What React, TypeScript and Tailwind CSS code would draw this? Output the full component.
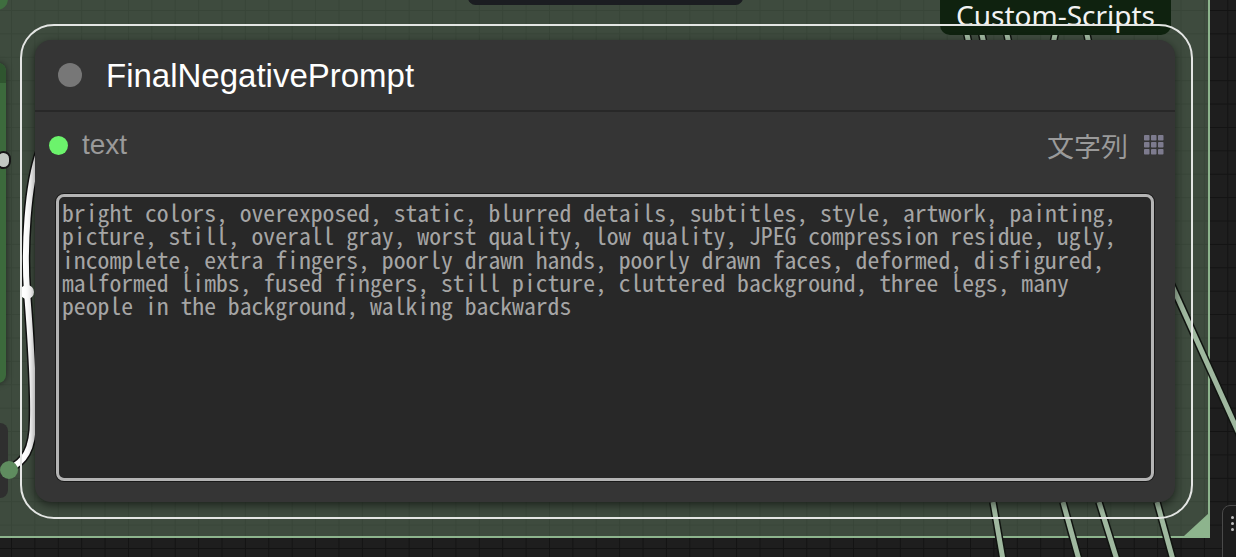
import React from "react";

const promptLines = [
  "bright colors, overexposed, static, blurred details, subtitles, style, artwork, painting,",
  "picture, still, overall gray, worst quality, low quality, JPEG compression residue, ugly,",
  "incomplete, extra fingers, poorly drawn hands, poorly drawn faces, deformed, disfigured,",
  "malformed limbs, fused fingers, still picture, cluttered background, three legs, many",
  "people in the background, walking backwards",
];

function Wires() {
  // links between nodes on the canvas, drawn behind the node itself
  const links = [
    "M993 502 L1003 560",
    "M1063 502 L1079 560",
    "M1099 502 L1117 560",
    "M1157 502 L1173 560",
    "M1165 270 L1240 436",
    "M966 30 L969 44",
    "M981 30 L984 44",
    "M1006 30 L1009 44",
    "M1056 30 L1053 44",
    "M1086 30 L1089 44",
  ];
  const white =
    "M9 469 C24 462 33 450 33 420 C34 385 30 330 27 292 C24 250 27 185 40 150";
  return (
    <svg className="absolute inset-0 pointer-events-none" width={1236} height={557}>
      {links.map((d) => (
        <g key={d}>
          <path d={d} stroke="#101410" strokeWidth={8} fill="none" />
          <path d={d} stroke="#9fb89f" strokeWidth={5} fill="none" />
        </g>
      ))}
      <path d={white} stroke="#121212" strokeWidth={9} fill="none" />
      <path d={white} stroke="#ffffff" strokeWidth={6} fill="none" />
      <circle cx={27} cy={292} r={7} fill="#ffffff" />
    </svg>
  );
}

function GridIcon() {
  return (
    <svg width={20} height={20} viewBox="0 0 20 20">
      {[0, 7, 14].map((y) =>
        [0, 7, 14].map((x) => (
          <rect key={`${x}-${y}`} x={x} y={y} width={5.5} height={5.5} rx={0.8} fill="#7d7b8e" />
        ))
      )}
    </svg>
  );
}

export default function App() {
  return (
    <div className="relative w-[1236px] h-[557px] overflow-hidden bg-[#1e1e1e] bg-[linear-gradient(to_right,#131313_1px,transparent_1px),linear-gradient(to_bottom,#131313_1px,transparent_1px)] bg-[size:23.4px_23.4px] bg-[position:11px_10px]">
      {/* group area */}
      <div className="absolute left-0 top-0 w-[1210px] h-[538px] bg-[rgba(94,120,94,0.5)] border-r-2 border-b-2 border-[#8db48d]" />
      <svg className="absolute left-[1184px] top-[513px]" width={25} height={23}>
        <polygon points="25,0 25,23 0,23" fill="#8db48d" />
      </svg>

      {/* neighbouring nodes, partly off screen */}
      <div className="absolute left-[468px] -top-[10px] w-[275px] h-[15px] rounded-[8px] bg-[#1b1d21]" />
      <div className="absolute -left-[14px] -top-[12px] w-[22px] h-[22px] rounded-full bg-[#3f6e3f]" />
      <div className="absolute -left-[20px] top-[63px] w-[26px] h-[320px] rounded-[8px] bg-[#3c6a3c] shadow-[0_0_6px_rgba(0,0,0,0.5)]" />
      <div className="absolute -left-[20px] top-[63px] w-[26px] h-[20px] rounded-t-[8px] bg-[#2f552f]" />
      <div className="absolute -left-[4px] top-[151px] w-[15px] h-[18px] rounded-full bg-[#c2c8c2] border-2 border-[#161616]" />
      <div className="absolute -left-[20px] top-[423px] w-[28px] h-[75px] rounded-[8px] bg-[#2f2f2f]" />

      <Wires />

      <div className="absolute left-[0px] top-[461px] w-[18px] h-[18px] rounded-full bg-[#5f8c5f]" />

      {/* group title */}
      <div className="absolute left-[940px] top-0 w-[231px] h-[35px] rounded-b-[10px] bg-[#0f220f] flex items-start justify-center pt-[1px] font-['Noto_Sans',sans-serif] text-[28px] leading-[28px] text-[#f2f2f2]">
        Custom-Scripts
      </div>

      {/* selection outline */}
      <div className="absolute left-[20px] top-[24px] w-[1173px] h-[495px] rounded-[34px] border-2 border-[#e4e6e4]" />

      {/* node */}
      <div className="absolute left-[35px] top-[40px] w-[1140px] h-[462px] rounded-[16px] bg-[#353535] shadow-[0_3px_10px_rgba(0,0,0,0.55)] flex flex-col font-['Liberation_Sans',Arial,sans-serif]">
        <div className="h-[72px] flex items-center gap-[24px] pl-[23px] border-b-2 border-[#282828]">
          <div className="w-[24px] h-[24px] rounded-full bg-[#777777]" />
          <span className="text-[33px] leading-none text-white">FinalNegativePrompt</span>
        </div>
        <div className="mt-[8px] h-[50px] flex items-center pl-[14px] pr-[11px]">
          <div className="w-[19px] h-[19px] rounded-full bg-[#6cf36c]" />
          <span className="ml-[14px] text-[28px] leading-none text-[#9a9a9a]">text</span>
          <span className="ml-auto text-[27px] leading-none text-[#9a9a9a] font-['Noto_Sans_CJK_JP',sans-serif]">
            文字列
          </span>
          <span className="ml-[16px] flex items-center">
            <GridIcon />
          </span>
        </div>
        <div className="mt-[24px] mx-[21px] mb-[21px] flex-1 rounded-[8px] border-[3px] border-[#b4b4b4] bg-[#282828] ring-1 ring-[#191919] pt-[4px] pl-[3px] overflow-hidden">
          <div className="font-['Noto_Sans_Mono_CJK_JP','DejaVu_Sans_Mono',monospace] text-[23.7px] leading-[23.3px] text-[#a5a5a5]">
            {promptLines.map((l) => (
              <div key={l} className="whitespace-pre">
                {l}
              </div>
            ))}
          </div>
        </div>
      </div>

      {/* side toolbar */}
      <div className="absolute left-[1222px] top-[505px] w-[30px] h-[70px] rounded-[8px] border border-[#4a4a4a] bg-[#1c1c1c] flex flex-col gap-[3px] pt-[10px] pl-[8px]">
        <div className="w-[3px] h-[3px] rounded-full bg-[#bbbbbb]" />
        <div className="w-[3px] h-[3px] rounded-full bg-[#bbbbbb]" />
        <div className="w-[3px] h-[3px] rounded-full bg-[#bbbbbb]" />
      </div>
    </div>
  );
}
